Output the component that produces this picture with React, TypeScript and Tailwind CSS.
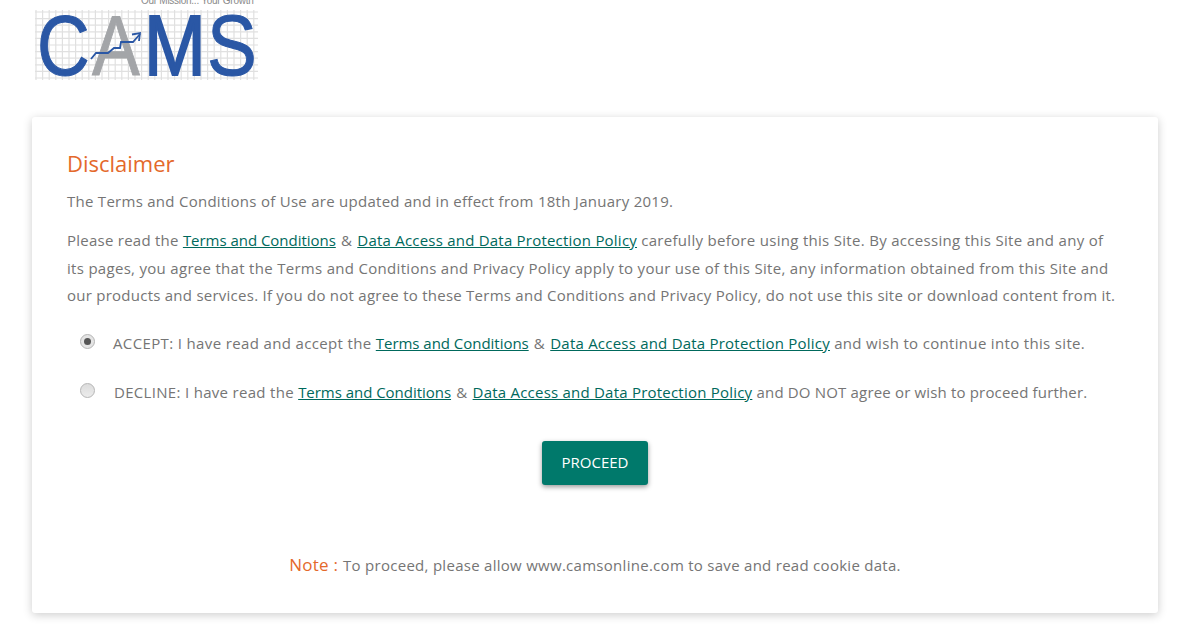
const L = ({ children }: { children: React.ReactNode }) => (
  <a href="#" className="tracking-[0.22px] text-[#00695c] underline">{children}</a>
);
const T = () => (
  <a href="#" className="tracking-[-0.03px] text-[#00695c] underline">Terms and Conditions</a>
);

function Logo() {
  const v = Array.from({ length: 34 }, (_, i) => i * 6.6);
  const h = Array.from({ length: 11 }, (_, i) => i * 6.6);
  return (
    <svg width="240" height="84" viewBox="0 0 240 84" className="block">
      <text x="111" y="4" fontSize="10" fill="#8a8a8a" fontFamily="Liberation Sans" textLength="113">Our Mission... Your Growth</text>
      <g stroke="#e0e0e0" strokeWidth="1.2">
        {v.map((x) => <line key={x} x1={x + 6} y1="10" x2={x + 6} y2="80" />)}
        {h.map((y) => <line key={y} x1="5" y1={y + 12} x2="228" y2={y + 12} />)}
      </g>
      <g fontFamily="Liberation Sans" fontSize="86">
        <text x="7" y="75" fill="#2a57a5" stroke="#2a57a5" strokeWidth="1" textLength="53" lengthAdjust="spacingAndGlyphs">C</text>
        <text x="62" y="75" fill="#a3a5a8" stroke="#a3a5a8" strokeWidth="1" textLength="48" lengthAdjust="spacingAndGlyphs">A</text>
        <text x="114" y="75" fill="#2a57a5" stroke="#2a57a5" strokeWidth="2" textLength="62" lengthAdjust="spacingAndGlyphs">M</text>
        <text x="177" y="75" fill="#2a57a5" stroke="#2a57a5" strokeWidth="1" textLength="50" lengthAdjust="spacingAndGlyphs">S</text>
      </g>
      <path d="M61 59 L66 53 H78 L84 48 H90 L91 42 H103 L110 34" fill="none" stroke="#2a57a5" strokeWidth="1.8" />
      <path d="M102 34.5 L110 33 L109 41" fill="none" stroke="#2a57a5" strokeWidth="1.8" />
    </svg>
  );
}

export default function App() {
  return (
    <div className="h-[628px] w-[1200px] overflow-hidden bg-white font-['Open_Sans',sans-serif] text-[15px] tracking-[0.27px] text-[#757575]">
      <div className="h-[117px] pl-[30px]"><Logo /></div>
      <div className="mx-[32px] h-[496px] w-[1126px] rounded-[3px] bg-white pl-[35px] pr-[30px] pt-[31px] shadow-[0_2px_10px_rgba(0,0,0,0.2)]">
        <h1 className="text-[22px] leading-[30px] tracking-normal text-[#e4692b]">Disclaimer</h1>
        <p className="mt-[10px] leading-[27px]">The Terms and Conditions of Use are updated and in effect from 18th January 2019.</p>
        <p className="mr-[8px] mt-[12px] leading-[27.5px] tracking-[0.25px]">
          Please read the <T /> <span className="mx-[1px]">&amp;</span> <L>Data Access and Data Protection Policy</L> <span className="tracking-[0.3px]">carefully before using this Site. By accessing this Site and any of</span> <span className="tracking-[0.3px]">its pages, you agree that the Terms and Conditions and Privacy Policy apply to your use of this Site, any information obtained from this Site and</span> our products and services. If you do not agree to these Terms and Conditions and Privacy Policy, do not use this site or download content from it.
        </p>
        <div className="mt-[20px] flex h-[27px] items-center">
          <span className="mb-[4px] ml-[13px] mr-[18px] flex h-[15px] w-[15px] items-center justify-center rounded-full border border-[#b5b5b5] bg-[#e4e4e4]">
            <span className="h-[7px] w-[7px] rounded-full bg-[#555]" />
          </span>
          <span><span className="tracking-[0.36px]">ACCEPT: I have read and accept the</span> <T /> <span className="mx-[1px]">&amp;</span> <L>Data Access and Data Protection Policy</L> <span className="tracking-[0.33px]">and wish to continue into this site.</span></span>
        </div>
        <div className="mt-[22px] flex h-[27px] items-center">
          <span className="mb-[4px] ml-[13px] mr-[19px] h-[15px] w-[15px] rounded-full border border-[#b5b5b5] bg-gradient-to-b from-[#dcdcdc] to-[#ececec]" />
          <span><span className="tracking-[0.31px]">DECLINE: I have read the</span> <T /> <span className="mx-[1px]">&amp;</span> <L>Data Access and Data Protection Policy</L> <span className="tracking-[0.17px]">and DO NOT agree or wish to proceed further.</span></span>
        </div>
        <div className="mt-[35px] flex justify-center">
          <button className="ml-[-5px] h-[44px] w-[106px] rounded-[3px] bg-[#00796b] text-[15px] font-medium tracking-normal text-white shadow-[0_2px_5px_rgba(0,0,0,0.4)]">PROCEED</button>
        </div>
        <p className="ml-[-5px] mt-[66px] text-center leading-[27px] tracking-[0.28px]">
          <span className="text-[17px] text-[#e4692b]">Note : </span>To proceed, please allow www.camsonline.com to save and read cookie data.
        </p>
      </div>
    </div>
  );
}
